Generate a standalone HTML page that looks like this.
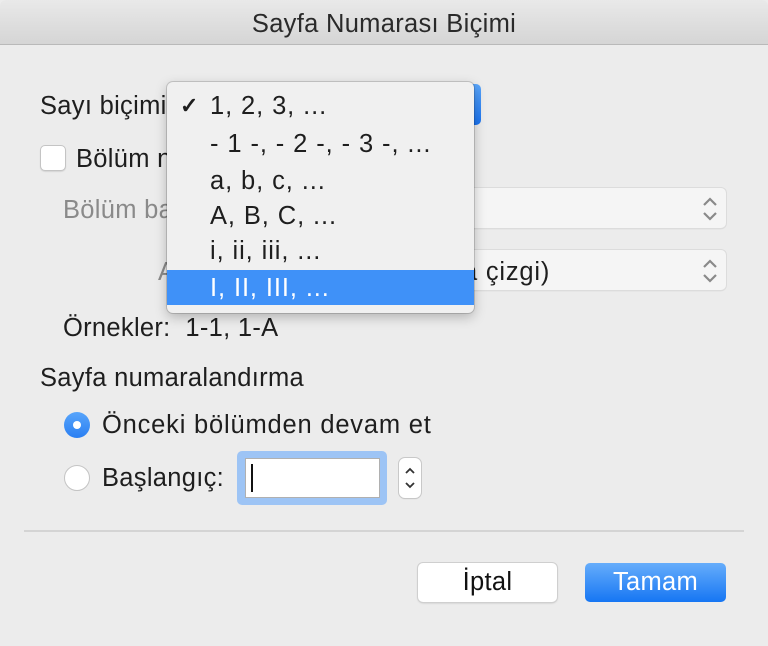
<!DOCTYPE html>
<html><head><meta charset="utf-8"><style>
*{margin:0;padding:0;box-sizing:border-box}
body{width:768px;height:646px;overflow:hidden;background:#ececec;font-family:"Liberation Sans",sans-serif;position:relative;color:#1e1e1e}
.a{position:absolute;white-space:nowrap}
.t{font-size:25.5px;letter-spacing:0.3px;height:30px;line-height:30px}
.m{letter-spacing:0.9px}
</style></head><body>
<div class="a" style="left:0;top:0;width:768px;height:45px;background:linear-gradient(#e9e9e9,#d5d5d5);border-bottom:1px solid #b9b9b9;border-radius:6px 6px 0 0"></div>
<div class="a t" style="left:0;width:768px;top:9px;text-align:center;color:#2a2a2a">Sayfa Numarası Biçimi</div>

<div class="a t" style="left:40px;top:91px">Sayı biçimi</div>
<div class="a" style="left:420px;top:84px;width:61px;height:41px;background:linear-gradient(#5aa6fb,#1a73f0);border-radius:5px"></div>

<div class="a" style="left:40px;top:145px;width:26px;height:26px;background:#fff;border:1px solid #c4c4c4;border-radius:5px;box-shadow:0 1px 1px rgba(0,0,0,.1)"></div>
<div class="a t" style="left:76px;top:144px">Bölüm n</div>

<div class="a t" style="left:63px;top:195px;color:#8a8a8a">Bölüm ba</div>
<div class="a" style="left:440px;top:188px;width:286px;height:40px;background:#f5f5f5;border-radius:5px;box-shadow:0 0 0 1px #dcdcdc,0 1px 1px rgba(0,0,0,.15)"></div>
<svg class="a" style="left:700px;top:196px" width="20" height="26" viewBox="0 0 20 26"><path d="M4 9l6-6 6 6M4 17l6 6 6-6" fill="none" stroke="#8a8a8a" stroke-width="2.2"/></svg>

<div class="a t" style="left:158px;top:257px;color:#8a8a8a">A</div>
<div class="a" style="left:440px;top:250px;width:286px;height:40px;background:#f5f5f5;border-radius:5px;box-shadow:0 0 0 1px #dcdcdc,0 1px 1px rgba(0,0,0,.15)"></div>
<div class="a t" style="left:463px;top:257px;letter-spacing:0.8px">a çizgi)</div>
<svg class="a" style="left:700px;top:258px" width="20" height="26" viewBox="0 0 20 26"><path d="M4 9l6-6 6 6M4 17l6 6 6-6" fill="none" stroke="#8a8a8a" stroke-width="2.2"/></svg>

<div class="a t" style="left:63px;top:313px">Örnekler:&nbsp; 1-1, 1-A</div>

<!-- menu -->
<div class="a" style="left:167px;top:82px;width:307px;height:231px;background:#f0f0f0;border-radius:6px;box-shadow:0 0 0 1px rgba(0,0,0,.15),0 4px 12px rgba(0,0,0,.25);overflow:hidden">
<div class="a" style="left:0;top:188px;width:307px;height:35px;background:#3f91f8"></div>
</div>
<div class="a t" style="left:180px;top:91px;font-size:22px;font-weight:bold">✓</div>
<div class="a t m" style="left:210px;top:91px">1, 2, 3, ...</div>
<div class="a t m" style="left:210px;top:129px">- 1 -, - 2 -, - 3 -, ...</div>
<div class="a t m" style="left:210px;top:166px">a, b, c, ...</div>
<div class="a t m" style="left:210px;top:201px">A, B, C, ...</div>
<div class="a t m" style="left:210px;top:236px">i, ii, iii, ...</div>
<div class="a t m" style="left:210px;top:273px;color:#fff">I, II, III, ...</div>

<div class="a t" style="left:40px;top:363px">Sayfa numaralandırma</div>

<div class="a" style="left:64px;top:412px;width:26px;height:26px;border-radius:50%;background:linear-gradient(#58a5fb,#2a7ff2)"></div>
<div class="a" style="left:73px;top:421px;width:8px;height:8px;border-radius:50%;background:#fff"></div>
<div class="a t" style="left:102px;top:410px;letter-spacing:0.8px">Önceki bölümden devam et</div>

<div class="a" style="left:64px;top:465px;width:26px;height:26px;border-radius:50%;background:#fff;border:1px solid #c4c4c4"></div>
<div class="a t" style="left:102px;top:463px">Başlangıç:</div>
<div class="a" style="left:237px;top:451px;width:150px;height:54px;background:#9dc4f5;border-radius:5px"></div>
<div class="a" style="left:245px;top:458px;width:135px;height:40px;background:#fff;border:1px solid #b0b0b0"></div>
<div class="a" style="left:251px;top:464px;width:2px;height:28px;background:#111"></div>
<div class="a" style="left:399px;top:458px;width:22px;height:40px;background:#fff;border-radius:6px;box-shadow:0 0 0 1px #c8c8c8,0 1px 1px rgba(0,0,0,.15)"></div>
<svg class="a" style="left:403px;top:464px" width="14" height="28" viewBox="0 0 14 28"><path d="M3 9l4-4 4 4M3 19l4 4 4-4" fill="none" stroke="#333" stroke-width="1.8"/></svg>

<div class="a" style="left:24px;top:530px;width:720px;height:2px;background:#d4d4d4"></div>

<div class="a" style="left:418px;top:563px;width:139px;height:39px;background:#fff;border-radius:5px;box-shadow:0 0 0 1px #cfcfcf,0 1px 2px rgba(0,0,0,.2)"></div>
<div class="a t" style="left:418px;top:567px;width:139px;text-align:center;color:#111">İptal</div>
<div class="a" style="left:585px;top:563px;width:141px;height:39px;background:linear-gradient(#66adfb,#1676f3);border-radius:5px"></div>
<div class="a t" style="left:585px;top:567px;width:141px;text-align:center;color:#fff">Tamam</div>
</body></html>
